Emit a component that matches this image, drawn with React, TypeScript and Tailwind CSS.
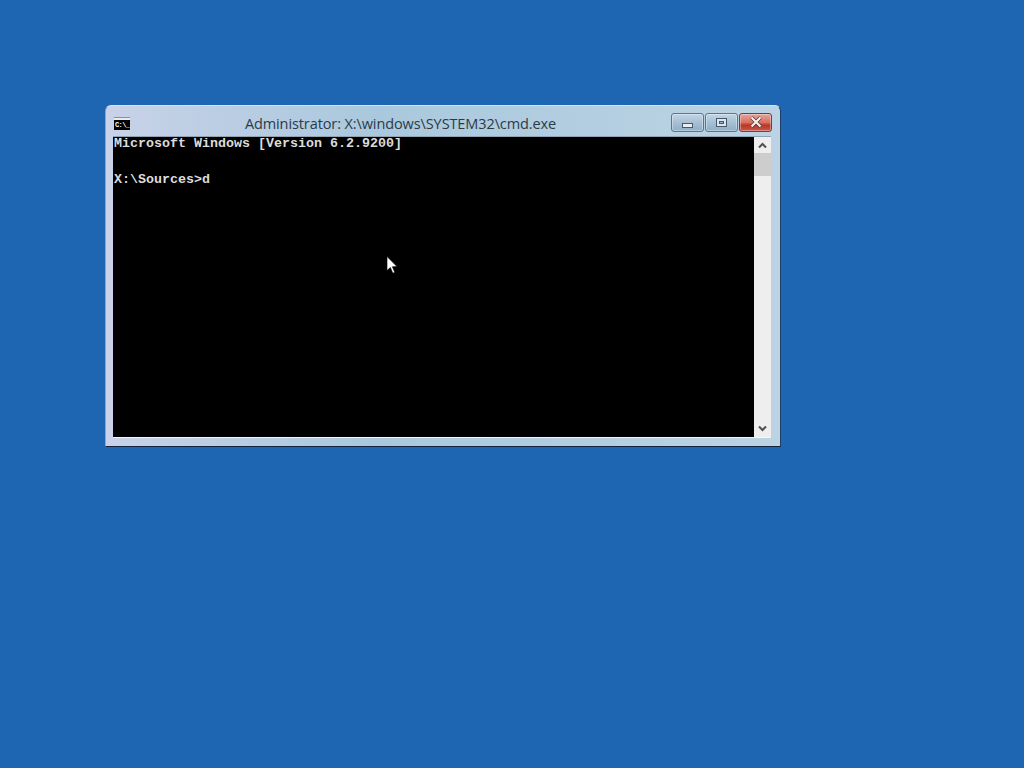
import React from 'react';

const ConsoleIcon = () => (
  <div className="w-4 h-[13px] bg-[#d8dde2] flex flex-col shrink-0">
    <div className="h-[3px] bg-[#e8ecef] border-t border-[#8a8f94]" />
    <div className="flex-1 bg-black text-white text-[7px] leading-[10px] font-bold font-['Liberation_Mono',monospace] tracking-[-0.6px] pl-[1px] overflow-hidden">
      C:\_
    </div>
  </div>
);

const CaptionButton = ({ className, children }: { className: string; children: React.ReactNode }) => (
  <div className={`w-[33px] h-[19px] rounded-[3px] border border-[#5d7690] flex items-center justify-center shadow-[inset_0_0_0_1px_rgba(255,255,255,0.35)] ${className}`}>
    {children}
  </div>
);

export default function App() {
  return (
    <div className="relative w-[1024px] h-[768px] overflow-hidden bg-[#1f66b2]">
      {/* cmd window */}
      <div className="absolute left-[105px] top-[105px] w-[676px] h-[342px] rounded-t-[6px] border border-t-[#d5e4f0] border-l-[#8aa6c8] border-r-[#1d3f66] border-b-[#12233f] bg-[linear-gradient(90deg,#c8d2e8_0%,#aac8dd_40%,#bcd3e4_100%)] flex flex-col">
        <div className="h-[30px] shrink-0 flex items-center pl-[8px] pr-[8px] pt-[5px]">
          <ConsoleIcon />
          <div className="flex-1 text-center text-[14.5px] leading-5 text-[#2c3a48] font-['Open_Sans','Liberation_Sans',sans-serif] whitespace-nowrap tracking-[-0.1px]">
            Administrator: X:\windows\SYSTEM32\cmd.exe
          </div>
          <div className="flex gap-[1px] items-center -mt-[3px]">
            <CaptionButton className="bg-[linear-gradient(180deg,#c3d5e4_0%,#a7c0d4_50%,#8faec6_100%)]">
              <div className="w-[11px] h-[5px] mt-[6px] bg-[#e8eef3] border border-[#45586c]" />
            </CaptionButton>
            <CaptionButton className="bg-[linear-gradient(180deg,#c3d5e4_0%,#a7c0d4_50%,#8faec6_100%)]">
              <div className="w-[11px] h-[9px] border border-[#45586c] bg-[#dbe5ec] flex items-center justify-center">
                <div className="w-[5px] h-[3px] bg-[#9db6c9] border border-[#45586c]" />
              </div>
            </CaptionButton>
            <CaptionButton className="border-[#7d3a32] bg-[linear-gradient(180deg,#e2a79c_0%,#d9705f_50%,#b8372a_65%,#c9574a_100%)]">
              <svg width="14" height="12" viewBox="0 0 14 12">
                <path d="M2.5 1.5 L11.5 10.5 M11.5 1.5 L2.5 10.5" stroke="#4a2a28" strokeWidth="3.6" />
                <path d="M2.5 1.5 L11.5 10.5 M11.5 1.5 L2.5 10.5" stroke="#f4ecea" strokeWidth="2.4" />
              </svg>
            </CaptionButton>
          </div>
        </div>

        <div className="ml-[7px] mr-[9px] h-[302px] flex border-t border-b border-t-[#8fa3b4] border-b-[#f4f6f8] bg-white">
          <div className="flex-1 bg-black text-[#dcdcdc] font-['Liberation_Mono',monospace] font-bold text-[13.33px] pl-[1px] whitespace-pre">
            <div className="leading-[14px]">Microsoft Windows [Version 6.2.9200]</div>
            <div className="h-[20px]" />
            <div className="leading-[18px]">X:\Sources&gt;d</div>
          </div>
          <div className="w-[17px] shrink-0 bg-[#eeeeee] flex flex-col items-center">
            <div className="h-[16px] w-full flex items-center justify-center">
              <svg width="9" height="7" viewBox="0 0 9 7">
                <path d="M1 5.5 L4.5 2 L8 5.5" fill="none" stroke="#505050" strokeWidth="2" />
              </svg>
            </div>
            <div className="w-full h-[23px] bg-[#cdcdcd]" />
            <div className="flex-1" />
            <div className="h-[17px] w-full flex items-center justify-center">
              <svg width="9" height="7" viewBox="0 0 9 7">
                <path d="M1 1.5 L4.5 5 L8 1.5" fill="none" stroke="#505050" strokeWidth="2" />
              </svg>
            </div>
          </div>
        </div>
      </div>

      {/* mouse pointer */}
      <svg className="absolute left-[386px] top-[256px]" width="13" height="19" viewBox="0 0 13 19">
        <path d="M1 0.5 V14.5 L4.4 11.6 L6.8 17.2 L8.8 16.3 L6.4 10.8 L11 10.6 Z" fill="#ffffff" stroke="#000000" strokeWidth="0.6" />
      </svg>
    </div>
  );
}
